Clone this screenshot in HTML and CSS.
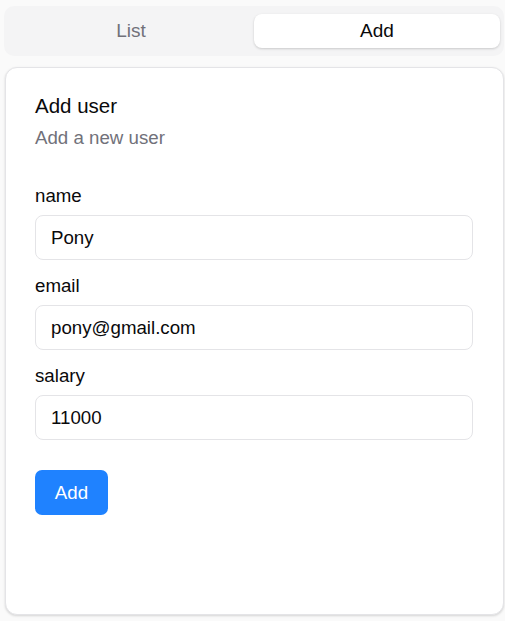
FILE: index.html
```html
<!DOCTYPE html>
<html lang="en">
<head>
<meta charset="utf-8">
<title>Add user</title>
<link rel="stylesheet" href="styles.css">
</head>
<body>
<div class="app">
  <div class="tabs">
    <button class="tab">List</button>
    <button class="tab tab-active">Add</button>
  </div>
  <div class="card">
    <h2 class="card-title">Add user</h2>
    <p class="card-desc">Add a new user</p>
    <form class="form">
      <div class="field">
        <label class="label">name</label>
        <input class="input" value="Pony">
      </div>
      <div class="field">
        <label class="label">email</label>
        <input class="input" value="pony@gmail.com">
      </div>
      <div class="field">
        <label class="label">salary</label>
        <input class="input" value="11000">
      </div>
      <button type="button" class="btn">Add</button>
    </form>
  </div>
</div>
</body>
</html>
```
FILE: styles.css
```css
* { box-sizing: border-box; }
html, body {
  margin: 0;
  padding: 0;
  background: #fafafa;
  font-family: "Liberation Sans", Arial, sans-serif;
  color: #09090b;
}
.app {
  padding: 6px 1px 7px 4px;
  display: flex;
  flex-direction: column;
  gap: 11px;
}
.tabs {
  background: #f4f4f5;
  border-radius: 10px;
  padding: 8px 4px;
  display: grid;
  grid-template-columns: 1fr 1fr;
  height: 50px;
}
.tab {
  border: 0;
  background: transparent;
  font-family: inherit;
  font-size: 19px;
  color: #71717a;
  border-radius: 8px;
  height: 34px;
  padding: 0;
}
.tab-active {
  background: #fff;
  color: #09090b;
  box-shadow: 0 1px 3px rgba(0,0,0,0.12), 0 1px 2px rgba(0,0,0,0.06);
}
.card {
  margin-left: 1px;
  background: #fff;
  border: 1px solid #e4e4e7;
  border-radius: 12px;
  box-shadow: 0 1px 3px rgba(0,0,0,0.1), 0 1px 2px rgba(0,0,0,0.06);
  height: 548px;
  padding: 25px 30px 30px 29px;
}
.card-title {
  margin: 0;
  font-size: 20.5px;
  font-weight: 400;
  line-height: 26px;
}
.card-desc {
  margin: 7px 0 0;
  font-size: 18.7px;
  line-height: 24px;
  color: #71717a;
}
.form {
  margin-top: 36px;
  display: flex;
  flex-direction: column;
  gap: 16px;
}
.field {
  display: flex;
  flex-direction: column;
  gap: 9px;
}
.label {
  font-size: 18.7px;
  line-height: 20px;
}
.input {
  height: 45px;
  border: 1px solid #e4e4e7;
  border-radius: 8px;
  padding: 0 15px;
  font-family: inherit;
  font-size: 18.7px;
  color: #09090b;
  background: #fff;
  outline: none;
  width: 100%;
}
.btn {
  margin-top: 14px;
  align-self: flex-start;
  width: 73px;
  height: 45px;
  border: 0;
  border-radius: 7px;
  background: #1f82ff;
  color: #fff;
  font-family: inherit;
  font-size: 18.7px;
}
```
